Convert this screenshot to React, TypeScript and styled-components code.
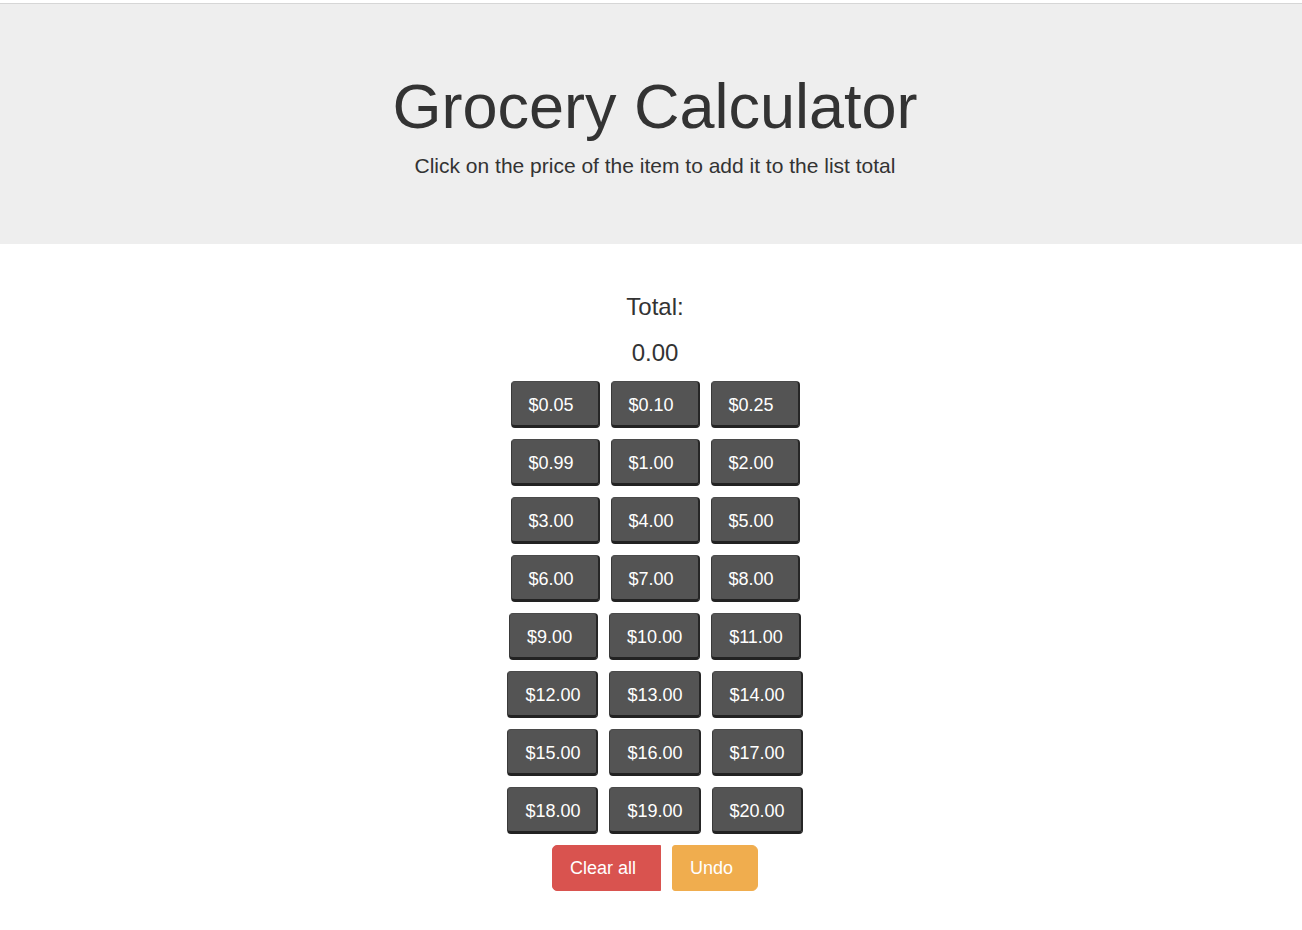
import React, { useState } from "react";
import styled, { createGlobalStyle } from "styled-components";

const Global = createGlobalStyle`
  html, body { margin: 0; padding: 0; background: #fff; }
  body { font-family: "Liberation Sans", Arial, sans-serif; color: #333; }
  * { box-sizing: border-box; }
`;

const Page = styled.div`
  padding-top: 3px;
  padding-left: 8px;
`;

const Jumbotron = styled.header`
  background: #eee;
  border-top: 1px solid #d6d6d6;
  padding: 48px 0;
  text-align: center;
  margin-left: -8px;
  padding-left: 8px;
  margin-bottom: 30px;
`;

const Title = styled.h1`
  font-size: 63px;
  font-weight: 400;
  line-height: 1.1;
  margin: 20px 0 10px;
  color: #333;
`;

const Lead = styled.p`
  font-size: 21px;
  line-height: 30px;
  margin: 0 0 15px;
`;

const Main = styled.main`
  display: flex;
  flex-direction: column;
  align-items: center;
`;

const Heading = styled.h3<{ $top: number; $bottom: number }>`
  font-size: 24px;
  font-weight: 400;
  line-height: 26px;
  margin: ${(p) => p.$top}px 0 ${(p) => p.$bottom}px;
  color: #333;
`;

const Grid = styled.div`
  display: flex;
  flex-direction: column;
  align-items: center;
  gap: 11px;
`;

const Row = styled.div`
  display: flex;
  gap: 11px;
  justify-content: center;
`;

const PriceButton = styled.button`
  min-width: 89px;
  height: 47px;
  padding: 12px 16px 8px 17px;
  background: #545454;
  color: #fff;
  font-family: "Liberation Sans", Arial, sans-serif;
  font-size: 18px;
  line-height: 23px;
  text-align: left;
  border: 1px solid #3a3a3a;
  border-right: 2px solid #262626;
  border-bottom: 3px solid #222;
  border-top-color: #4a4a4a;
  border-radius: 4px;
  cursor: pointer;
`;

const Actions = styled.div`
  display: flex;
  gap: 11px;
  margin-top: 11px;
`;

const ActionButton = styled.button<{ $bg: string; $radius: string }>`
  height: 46px;
  padding: 10px 24px 10px 17px;
  background: ${(p) => p.$bg};
  color: #fff;
  font-family: "Liberation Sans", Arial, sans-serif;
  font-size: 18px;
  line-height: 24px;
  border: 1px solid ${(p) => p.$bg};
  border-radius: ${(p) => p.$radius};
  cursor: pointer;
`;

const prices = [
  [0.05, 0.1, 0.25],
  [0.99, 1, 2],
  [3, 4, 5],
  [6, 7, 8],
  [9, 10, 11],
  [12, 13, 14],
  [15, 16, 17],
  [18, 19, 20],
];

export default function App() {
  const [history, setHistory] = useState<number[]>([]);
  const total = history.reduce((a, b) => a + b, 0);
  return (
    <Page>
      <Global />
      <Jumbotron>
        <Title>Grocery Calculator</Title>
        <Lead>Click on the price of the item to add it to the list total</Lead>
      </Jumbotron>
      <Main>
        <Heading $top={20} $bottom={20}>Total:</Heading>
        <Heading $top={0} $bottom={15}>{total.toFixed(2)}</Heading>
        <Grid>
          {prices.map((row, i) => (
            <Row key={i}>
              {row.map((p) => (
                <PriceButton key={p} onClick={() => setHistory([...history, p])}>
                  ${p.toFixed(2)}
                </PriceButton>
              ))}
            </Row>
          ))}
        </Grid>
        <Actions>
          <ActionButton $bg="#d9534f" $radius="5px 0 0 5px" onClick={() => setHistory([])}>
            Clear all
          </ActionButton>
          <ActionButton $bg="#f0ad4e" $radius="3px 6px 6px 3px" onClick={() => setHistory(history.slice(0, -1))}>
            Undo
          </ActionButton>
        </Actions>
      </Main>
    </Page>
  );
}
